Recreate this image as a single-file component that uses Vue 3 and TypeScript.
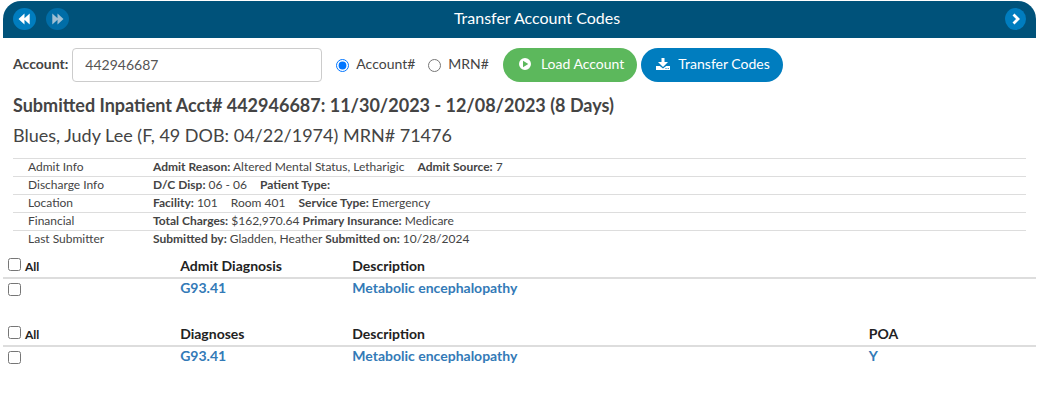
<script setup lang="ts">
import { ref } from 'vue'

interface Field { label?: string; value: string; gap?: boolean }
interface InfoRow { name: string; fields: Field[] }
interface CodeTable { id: string; title: string; code: string; description: string; poa?: string }

const account = ref('442946687')
const searchBy = ref('account')
const selected = ref<string[]>([])

const info: InfoRow[] = [
  { name: 'Admit Info', fields: [
    { label: 'Admit Reason:', value: 'Altered Mental Status, Letharigic' },
    { label: 'Admit Source:', value: '7', gap: true },
  ] },
  { name: 'Discharge Info', fields: [
    { label: 'D/C Disp:', value: '06 - 06' },
    { label: 'Patient Type:', value: '', gap: true },
  ] },
  { name: 'Location', fields: [
    { label: 'Facility:', value: '101' },
    { value: 'Room 401', gap: true },
    { label: 'Service Type:', value: 'Emergency', gap: true },
  ] },
  { name: 'Financial', fields: [
    { label: 'Total Charges:', value: '$162,970.64' },
    { label: 'Primary Insurance:', value: 'Medicare' },
  ] },
  { name: 'Last Submitter', fields: [
    { label: 'Submitted by:', value: 'Gladden, Heather' },
    { label: 'Submitted on:', value: '10/28/2024' },
  ] },
]

const tables: CodeTable[] = [
  { id: 'admit', title: 'Admit Diagnosis', code: 'G93.41', description: 'Metabolic encephalopathy' },
  { id: 'dx', title: 'Diagnoses', code: 'G93.41', description: 'Metabolic encephalopathy', poa: 'Y' },
]

function toggle(id: string) {
  selected.value = selected.value.includes(id)
    ? selected.value.filter((s) => s !== id)
    : [...selected.value, id]
}
</script>

<template>
  <main class="page">
    <header class="bar">
      <nav class="nav">
        <button class="round" type="button" aria-label="Previous account">
          <svg width="13" height="12" viewBox="0 0 13 12"><path fill="currentColor" d="M6.5 .5v4.8L11.7.5v11L6.5 6.700v4.800L.5 6z" /></svg>
        </button>
        <button class="round" type="button" aria-label="Next account" disabled>
          <svg width="13" height="12" viewBox="0 0 13 12"><path fill="currentColor" d="M6.500 .5v4.800L1.300.5v11L6.500 6.700v4.800L12.500 6z" /></svg>
        </button>
      </nav>
      <h1 class="title">Transfer Account Codes</h1>
      <button class="round small" type="button" aria-label="Open panel">
        <svg width="10" height="12" viewBox="0 0 10 12"><path fill="none" stroke="currentColor" stroke-width="2.800" d="M2.500 1.500 7 6l-4.500 4.500" /></svg>
      </button>
    </header>

    <form class="search" @submit.prevent>
      <label class="name" for="account">Account:</label>
      <input id="account" v-model="account" class="box" type="text">
      <label class="choice first"><input v-model="searchBy" type="radio" name="by" value="account">Account#</label>
      <label class="choice"><input v-model="searchBy" type="radio" name="by" value="mrn">MRN#</label>
      <button class="pill load" type="submit">
        <svg width="14" height="14" viewBox="0 0 14 14"><path fill="currentColor" fill-rule="evenodd" d="M7 1a6 6 0 1 0 0 12A6 6 0 0 0 7 1zM5 3.800v6.400L10.300 7z" /></svg>
        Load Account
      </button>
      <button class="pill transfer" type="button">
        <svg width="14" height="14" viewBox="0 0 14 14"><path fill="currentColor" fill-rule="evenodd" d="M5.500 1h3v4H12L7 10 2 5h3.500zM0 9h3.800L7 11.500 10.200 9H14v4H0zM9.500 11v1h1v-1zM11.700 11v1h1v-1z" /></svg>
        Transfer Codes
      </button>
    </form>

    <section class="summary">
      <h2 class="encounter">Submitted Inpatient Acct# 442946687: 11/30/2023 - 12/08/2023 (8 Days)</h2>
      <p class="patient">Blues, Judy Lee (F, 49 DOB: 04/22/1974) MRN# 71476</p>
      <table class="info">
        <tbody>
          <tr v-for="row in info" :key="row.name">
            <th scope="row">{{ row.name }}</th>
            <td>
              <template v-for="(field, i) in row.fields" :key="i"><span :class="{ gap: field.gap }"><b v-if="field.label">{{ field.label }}</b> {{ field.value }}</span>{{ ' ' }}</template>
            </td>
          </tr>
        </tbody>
      </table>
    </section>

    <table v-for="t in tables" :key="t.id" class="codes">
      <thead>
        <tr>
          <th class="pick"><label class="all"><input type="checkbox" :checked="selected.includes(t.id)" @change="toggle(t.id)">All</label></th>
          <th class="code">{{ t.title }}</th>
          <th>Description</th>
          <th class="poa">{{ t.poa ? 'POA' : '' }}</th>
        </tr>
      </thead>
      <tbody>
        <tr>
          <td><input class="tick" type="checkbox" :aria-label="'Select ' + t.code" :checked="selected.includes(t.id)" @change="toggle(t.id)"></td>
          <td><a href="#">{{ t.code }}</a></td>
          <td><a href="#">{{ t.description }}</a></td>
          <td><a v-if="t.poa" href="#">{{ t.poa }}</a></td>
        </tr>
      </tbody>
    </table>
  </main>
</template>

<style>
body {
  background: #fff;
}
</style>

<style scoped>
.page {
  padding: 1px 2px 0 3px;
  font-family: Lato, "Liberation Sans", sans-serif;
  font-size: 14px;
  line-height: 20px;
  color: #444;
}
.page * {
  box-sizing: border-box;
}
button,
input {
  font: inherit;
}
svg {
  display: block;
  flex: none;
}
.bar {
  display: flex;
  align-items: center;
  height: 37px;
  padding: 0 10px 1px;
  border-radius: 18px 18px 0 0;
  background: #00527a;
  color: #fff;
}
.nav {
  display: flex;
  gap: 10px;
}
.round {
  display: flex;
  align-items: center;
  justify-content: center;
  width: 23px;
  height: 22px;
  padding: 0;
  border: 0;
  border-radius: 50%;
  background: #007dbf;
  color: #fff;
}
.round.small {
  width: 21px;
}
.round:disabled {
  background: #006da7;
  color: #a0c0d4;
}
.title {
  flex: 1;
  margin: 0;
  padding-bottom: 2px;
  font-size: 16px;
  font-weight: 400;
  text-align: center;
}
.search {
  display: flex;
  align-items: center;
  padding: 10px 10px 0;
}
.name {
  margin-right: 4px;
  padding-bottom: 2px;
  font-weight: 700;
}
.box {
  width: 250px;
  height: 34px;
  padding: 0 12px 2px;
  border: 1px solid #ccc;
  border-radius: 4px;
  color: #555;
}
.choice {
  display: flex;
  align-items: center;
  margin-right: 14px;
  padding-bottom: 2px;
}
.choice.first {
  margin-left: 14px;
  margin-right: 13px;
}
.choice input {
  width: 13px;
  height: 13px;
  margin: 3px 7px 0 0;
}
.pill {
  display: flex;
  align-items: center;
  gap: 9px;
  height: 34px;
  margin-right: 4px;
  padding: 0 13px 2px 15px;
  border: 0;
  border-radius: 17px;
  color: #fff;
  white-space: nowrap;
}
.load {
  background: #5cb85c;
}
.transfer {
  gap: 8px;
  background: #007dbf;
}
.summary {
  padding: 11px 10px 0;
}
.encounter,
.patient {
  margin: 0;
  font-size: 18px;
  line-height: 24px;
}
.encounter {
  font-weight: 700;
}
.patient {
  margin-top: 6px;
}
.info {
  width: 100%;
  margin-top: 11px;
  border-collapse: collapse;
  font-size: 12px;
  line-height: 15px;
}
.info th,
.info td {
  padding: 0 0 2px;
  border-top: 1px solid #ddd;
  font-weight: 400;
  text-align: left;
}
.info th {
  width: 140px;
  padding-left: 15px;
}
.gap {
  margin-left: 10px;
}
.codes {
  width: 100%;
  table-layout: fixed;
  border-collapse: collapse;
  margin-bottom: 22px;
}
.summary + .codes {
  margin-top: 6px;
}
.codes th {
  height: 24px;
  padding: 0 5px;
  border-bottom: 2px solid #ddd;
  color: #222;
  font-weight: 700;
  text-align: left;
}
.codes td {
  height: 22px;
  padding: 0 5px;
  font-weight: 700;
  line-height: 18px;
  vertical-align: top;
}
.codes .pick,
.codes .code,
.codes .poa {
  width: 16.6667%;
}
.all {
  display: flex;
  align-items: center;
  gap: 4px;
  padding-top: 2px;
  font-size: 12px;
}
.all input,
.tick {
  width: 13px;
  height: 13px;
  margin: 0;
}
.all input {
  margin-bottom: 5px;
}
.tick {
  display: block;
  margin-top: 4px;
}
.codes a {
  color: #337ab7;
  text-decoration: none;
}
</style>
